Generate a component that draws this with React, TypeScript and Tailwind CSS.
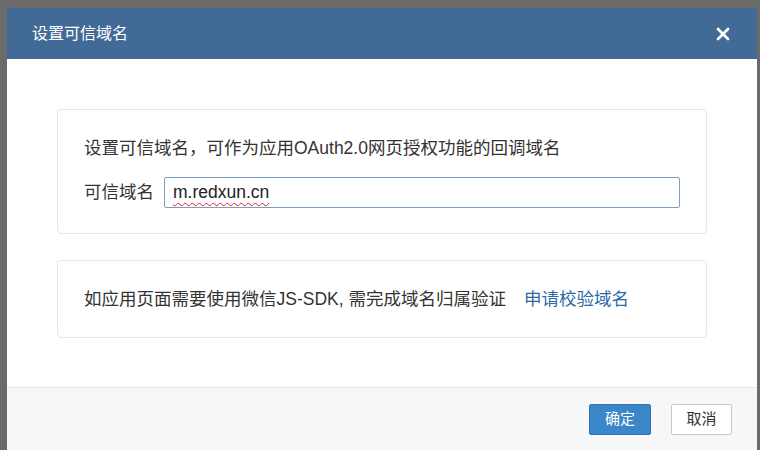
import { X } from "lucide-react";

const font = { fontFamily: '"Liberation Sans", "Noto Sans CJK SC", sans-serif' };

function Card({ className, children }: { className?: string; children: React.ReactNode }) {
  return <div className={`border border-[#e6e6e6] rounded-[4px] px-[26px] ${className ?? ""}`}>{children}</div>;
}

export default function App() {
  return (
    <div className="w-[760px] h-[450px] overflow-hidden bg-[#6b6b6b] pt-[8px] pl-[7px] pr-[3px] text-[#333]" style={font}>
      <div className="flex flex-col h-[442px] bg-white">
        {/* header */}
        <div className="h-[51px] shrink-0 bg-[#426a97] flex items-center justify-between pl-[25px] pr-[24px]">
          <span className="text-white text-[16px]">设置可信域名</span>
          <X className="w-[20px] h-[20px] text-white" strokeWidth={3.2} />
        </div>

        {/* body */}
        <div className="flex-1 px-[50px] pt-[50px]">
          <Card className="pt-[26px] pb-[25px]">
            <p className="text-[17.5px] leading-[25px]">设置可信域名，可作为应用OAuth2.0网页授权功能的回调域名</p>
            <div className="flex items-center gap-[10px] mt-[16px]">
              <span className="text-[17.5px] leading-[25px] w-[70px]">可信域名</span>
              <div className="flex-1 h-[31px] border border-[#7f9dc0] rounded-[2px] flex items-center px-[8px] text-[17.5px] text-[#222]">
                <span className="underline decoration-wavy decoration-[#e02020] decoration-1 underline-offset-[4px]">m.redxun.cn</span>
              </div>
            </div>
          </Card>
          <Card className="mt-[26px] pt-[26px] pb-[25px]">
            <p className="text-[17.5px] leading-[25px]">
              如应用页面需要使用微信JS-SDK, 需完成域名归属验证
              <a className="ml-[18px] text-[#2a6aa6] cursor-pointer">申请校验域名</a>
            </p>
          </Card>
        </div>

        {/* footer */}
        <div className="h-[63px] shrink-0 bg-[#f7f7f7] border-t border-[#e6e6e6] flex justify-end items-start pt-[16px] pr-[25px] gap-[20px]">
          <button className="w-[62px] h-[31px] rounded-[2px] bg-[#3a86c8] border border-[#2e76b6] text-white text-[15px]">确定</button>
          <button className="w-[61px] h-[31px] rounded-[2px] bg-white border border-[#c8c8c8] text-[#333] text-[15px]">取消</button>
        </div>
      </div>
    </div>
  );
}
